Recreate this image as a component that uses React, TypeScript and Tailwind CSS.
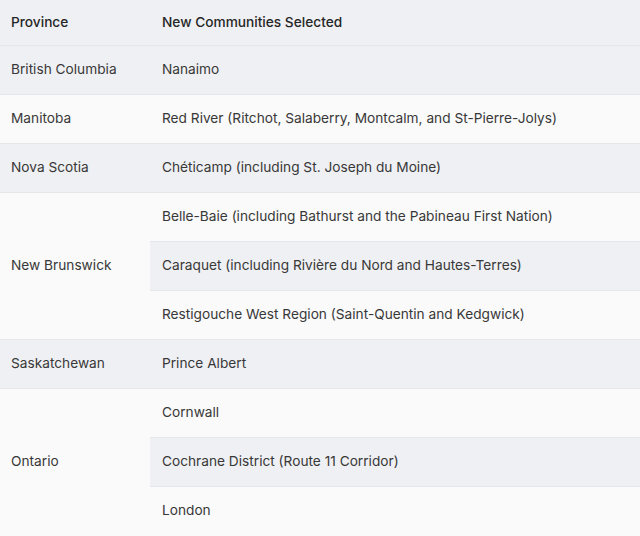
import React from "react";

type Group = { province: string; items: string[] };

const data: Group[] = [
  { province: "British Columbia", items: ["Nanaimo"] },
  { province: "Manitoba", items: ["Red River (Ritchot, Salaberry, Montcalm, and St-Pierre-Jolys)"] },
  { province: "Nova Scotia", items: ["Chéticamp (including St. Joseph du Moine)"] },
  {
    province: "New Brunswick",
    items: [
      "Belle-Baie (including Bathurst and the Pabineau First Nation)",
      "Caraquet (including Rivière du Nord and Hautes-Terres)",
      "Restigouche West Region (Saint-Quentin and Kedgwick)",
    ],
  },
  { province: "Saskatchewan", items: ["Prince Albert"] },
  { province: "Ontario", items: ["Cornwall", "Cochrane District (Route 11 Corridor)", "London"] },
];

export default function App() {
  let idx = 0;
  const rows: React.ReactNode[] = [];
  data.forEach((g, gi) => {
    const lastGroup = gi === data.length - 1;
    g.items.forEach((item, i) => {
      const stripe = idx % 2 === 0 ? "bg-[#eff0f3]" : "bg-[#fafafa]";
      idx++;
      const lastRow = lastGroup && i === g.items.length - 1;
      rows.push(
        <tr key={g.province + i} className={stripe}>
          {i === 0 && (
            <td
              rowSpan={g.items.length}
              className={`w-[150px] h-[49px] pl-[11px] align-middle ${lastGroup ? "" : "border-b border-[#e6e7ea]"} ${stripe}`}
            >
              {g.province}
            </td>
          )}
          <td className={`h-[49px] pl-3 align-middle ${lastRow ? "" : "border-b border-[#e6e7ea]"}`}>{item}</td>
        </tr>
      );
    });
  });

  return (
    <div className="w-[640px] h-[536px] overflow-hidden bg-[#fafafa]" style={{ fontFamily: "Inter, 'Noto Sans', sans-serif" }}>
      <table className="w-full border-collapse text-[13.7px] text-[#383838]">
        <thead>
          <tr className="bg-[#eff0f3]">
            <th className="w-[150px] h-[45px] pl-[11px] text-left font-medium text-[#262626] border-b border-[#e6e7ea]">Province</th>
            <th className="h-[45px] pl-3 text-left font-medium text-[#262626] border-b border-[#e6e7ea]">New Communities Selected</th>
          </tr>
        </thead>
        <tbody>{rows}</tbody>
      </table>
    </div>
  );
}
